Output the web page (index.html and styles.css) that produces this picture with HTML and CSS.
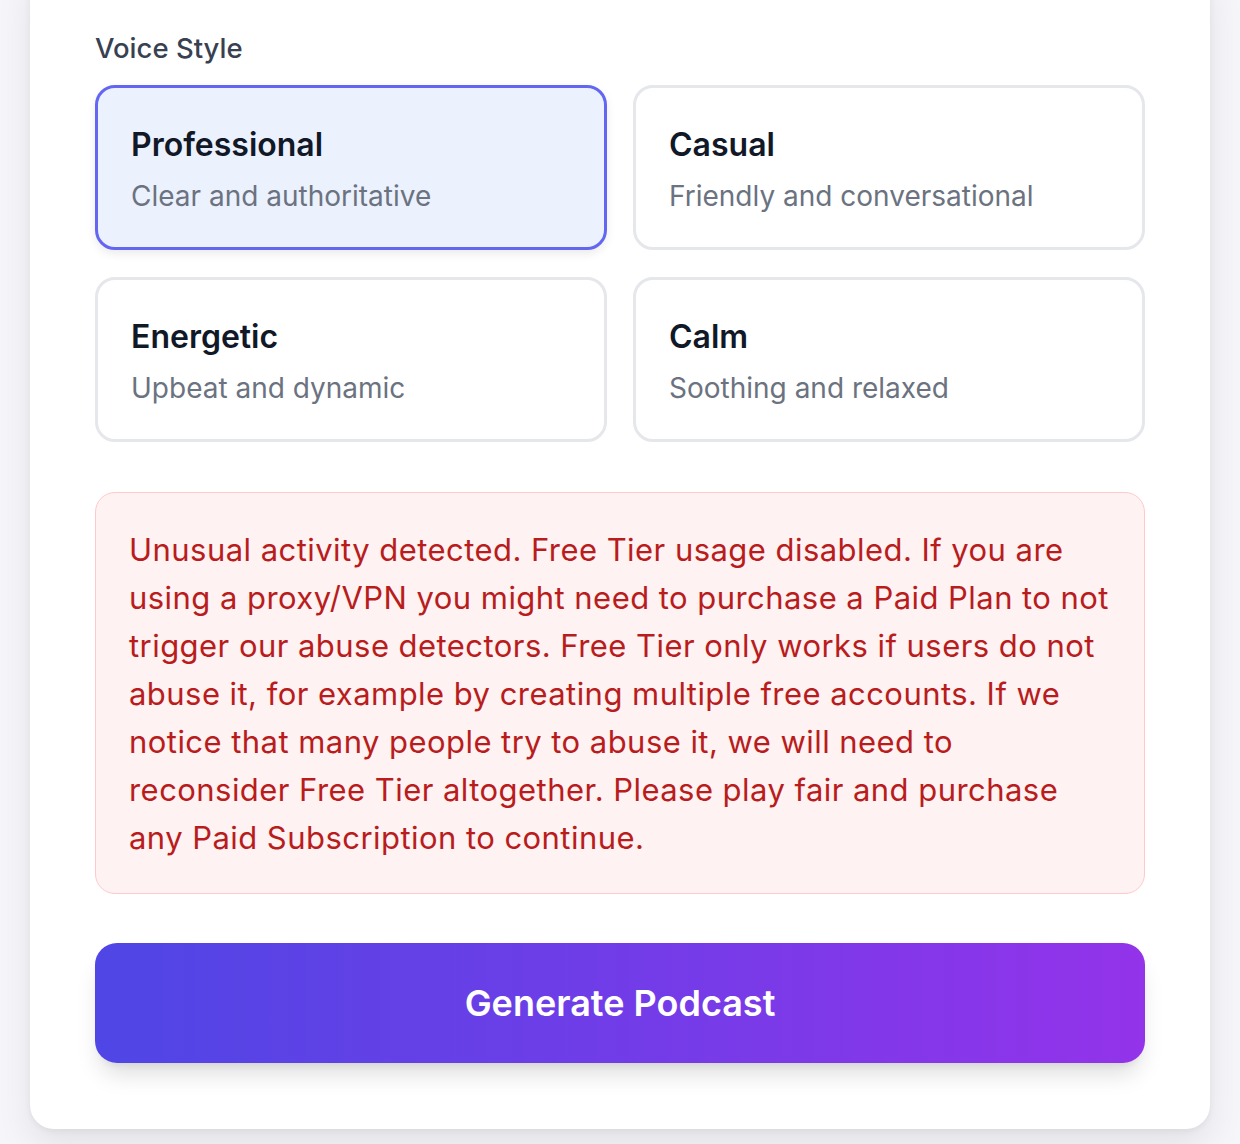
FILE: index.html
```html
<!DOCTYPE html>
<html lang="en">
<head>
  <meta charset="UTF-8" />
  <meta name="viewport" content="width=device-width, initial-scale=1.0" />
  <title>Generate Podcast</title>
  <link rel="stylesheet" href="styles.css">
</head>
<body>
  <div class="page">
    <div class="panel">
      <div class="field">
        <div class="field-label">Voice Style</div>
        <div class="style-grid">
          <button class="style-option selected">
            <span class="style-name">Professional</span>
            <span class="style-desc">Clear and authoritative</span>
          </button>
          <button class="style-option">
            <span class="style-name">Casual</span>
            <span class="style-desc">Friendly and conversational</span>
          </button>
          <button class="style-option">
            <span class="style-name">Energetic</span>
            <span class="style-desc">Upbeat and dynamic</span>
          </button>
          <button class="style-option">
            <span class="style-name">Calm</span>
            <span class="style-desc">Soothing and relaxed</span>
          </button>
        </div>
      </div>

      <!-- Error from the generate endpoint -->
      <div class="error-box">
        Unusual activity detected. Free Tier usage disabled. If you are using a proxy/VPN you might need to purchase a Paid Plan to not trigger our abuse detectors. Free Tier only works if users do not abuse it, for example by creating multiple free accounts. If we notice that many people try to abuse it, we will need to reconsider Free Tier altogether. Please play fair and purchase any Paid Subscription to continue.
      </div>

      <button class="generate-btn">Generate Podcast</button>
    </div>
  </div>
</body>
</html>
```

FILE: styles.css
```css
* {
  box-sizing: border-box;
  margin: 0;
  padding: 0;
}

body {
  font-family: 'Inter', 'Noto Sans', 'Liberation Sans', sans-serif;
  background-color: #f6f5fa;
  color: #111827;
  height: 100vh;
  overflow: hidden;
}

.page {
  padding: 0 30px;
}

.panel {
  margin-top: -40px;
  background-color: #fff;
  border-radius: 24px;
  padding: 70px 65px 66px;
  box-shadow: 0 18px 36px rgba(0, 0, 0, 0.08), 0 2px 6px rgba(0, 0, 0, 0.06);
}

.field-label {
  font-size: 27.5px;
  font-weight: 500;
  line-height: 36px;
  color: #374151;
  margin-bottom: 19px;
}

.style-grid {
  display: grid;
  grid-template-columns: 1fr 1fr;
  gap: 27px 26px;
}

.style-option {
  display: flex;
  flex-direction: column;
  align-items: flex-start;
  text-align: left;
  font-family: inherit;
  background-color: #fff;
  border: 3px solid #e5e7eb;
  border-radius: 20px;
  padding: 35px 33px 31px;
  cursor: pointer;
}

.style-option.selected {
  background-color: #ecf1fe;
  border-color: #6366f1;
  box-shadow: 0 4px 10px rgba(0, 0, 0, 0.08);
}

.style-name {
  font-size: 32px;
  font-weight: 600;
  line-height: 44px;
  color: #111827;
}

.style-desc {
  margin-top: 10px;
  font-size: 28px;
  line-height: 39px;
  color: #6b7280;
}

.error-box {
  margin-top: 50px;
  background-color: #fef2f2;
  border: 1.5px solid #fecaca;
  border-radius: 20px;
  padding: 33px 32px 31px 33px;
  font-size: 31px;
  letter-spacing: 0.45px;
  line-height: 48px;
  color: #b91c1c;
}

.generate-btn {
  display: block;
  width: 100%;
  height: 120px;
  margin-top: 49px;
  border: none;
  border-radius: 22px;
  background: linear-gradient(90deg, #4f46e5, #9333ea);
  color: #fff;
  font-family: inherit;
  font-size: 36px;
  font-weight: 600;
  cursor: pointer;
  box-shadow: 0 16px 24px -6px rgba(0, 0, 0, 0.14), 0 6px 10px -6px rgba(0, 0, 0, 0.1);
}
```
